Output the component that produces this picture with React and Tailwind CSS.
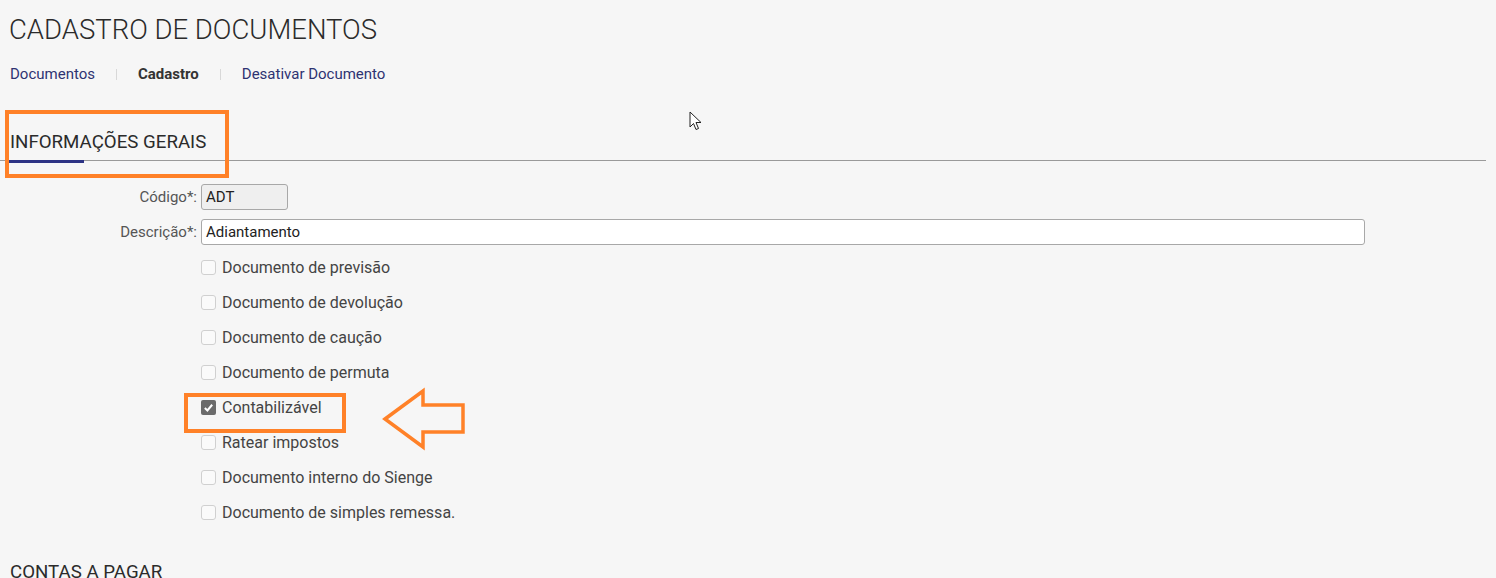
const opts = [
  { label: 'Documento de previsão', checked: false },
  { label: 'Documento de devolução', checked: false },
  { label: 'Documento de caução', checked: false },
  { label: 'Documento de permuta', checked: false },
  { label: 'Contabilizável', checked: true, mark: true },
  { label: 'Ratear impostos', checked: false },
  { label: 'Documento interno do Sienge', checked: false },
  { label: 'Documento de simples remessa.', checked: false },
]

function Box({ checked }) {
  if (checked) {
    return (
      <span className="flex h-[15px] w-[15px] items-center justify-center rounded-[2px] bg-[#6b6b6b]">
        <svg width="11" height="11" viewBox="0 0 12 12">
          <path d="M2 6.5 L4.8 9.2 L10 3" fill="none" stroke="#fff" strokeWidth="2.2" />
        </svg>
      </span>
    )
  }
  return <span className="h-[15px] w-[15px] rounded-[3px] border border-[#d0d0d0] bg-[#fafafa]" />
}

export default function App() {
  return (
    <div className="relative h-[578px] overflow-hidden bg-[#f6f6f6] font-['Roboto',sans-serif] text-[#333]">
      <h1 className="pl-[9px] pt-[12px] text-[27.5px] font-light leading-[36px] text-[#2b2b2b]">
        CADASTRO DE DOCUMENTOS
      </h1>

      <nav className="mt-[16px] flex items-center pl-[10px] text-[15px] leading-[20px]">
        <span className="text-[#2e3372]">Documentos</span>
        <span className="mx-[21px] h-[11px] w-px bg-[#d8d8d8]" />
        <span className="font-bold text-[#333]">Cadastro</span>
        <span className="mx-[21px] h-[11px] w-px bg-[#d8d8d8]" />
        <span className="text-[#2e3372]">Desativar Documento</span>
      </nav>

      <div className="mr-[10px] mt-[46px] border-b border-[#9a9a9a]">
        <div className="relative inline-block pb-[6px] pl-[10px] pr-[2px] text-[18.7px] leading-[24px] text-[#2b2b2b]">
          INFORMAÇÕES GERAIS
          <span className="absolute bottom-[-3px] left-[9px] h-[3px] w-[75px] bg-[#2d3384]" />
        </div>
      </div>

      <div className="mt-[23px] flex flex-col text-[15px]">
        <div className="flex h-[26px] items-center">
          <label className="w-[197px] text-right text-[#555]">Código*:</label>
          <div className="ml-[4px] flex h-[26px] w-[87px] items-center rounded-[3px] border border-[#a8a8a8] bg-[#efefef] px-[4px] text-[#222]">
            ADT
          </div>
        </div>
        <div className="mt-[9px] flex h-[26px] items-center">
          <label className="w-[197px] text-right text-[#555]">Descrição*:</label>
          <div className="ml-[4px] flex h-[26px] w-[1164px] items-center rounded-[3px] border border-[#a8a8a8] bg-white px-[4px] text-[#222]">
            Adiantamento
          </div>
        </div>

        <div className="mt-[5px] flex flex-col pl-[201px]">
          {opts.map((o) => (
            <div key={o.label} className="flex h-[35px] items-center gap-[6px] text-[16px] text-[#444]">
              <Box checked={o.checked} />
              <span>{o.label}</span>
            </div>
          ))}
        </div>
      </div>

      <h2 className="mt-[30px] pl-[10px] text-[18.7px] leading-[24px] text-[#2b2b2b]">CONTAS A PAGAR</h2>

      {/* annotation overlays */}
      <div className="absolute left-[5px] top-[110px] h-[68px] w-[224px] border-[4px] border-[#ff8128]" />
      <div className="absolute left-[184px] top-[393px] h-[40px] w-[162px] border-[4px] border-[#ff8128]" />
      <svg className="absolute left-[380px] top-[386px]" width="90" height="66" viewBox="380 386 90 66">
        <path
          d="M385 419 L423 391 L423 405 L463 405 L463 432 L423 432 L423 447 Z"
          fill="none"
          stroke="#ff8128"
          strokeWidth="3.5"
          strokeLinejoin="miter"
        />
      </svg>
      <svg className="absolute left-[689px] top-[111px]" width="16" height="22" viewBox="0 0 16 22">
        <path d="M1 1 L1 16 L4.5 12.5 L7 18.5 L9.5 17.5 L7 11.5 L12 11.5 Z" fill="#fff" stroke="#222" strokeWidth="1" />
      </svg>
    </div>
  )
}
